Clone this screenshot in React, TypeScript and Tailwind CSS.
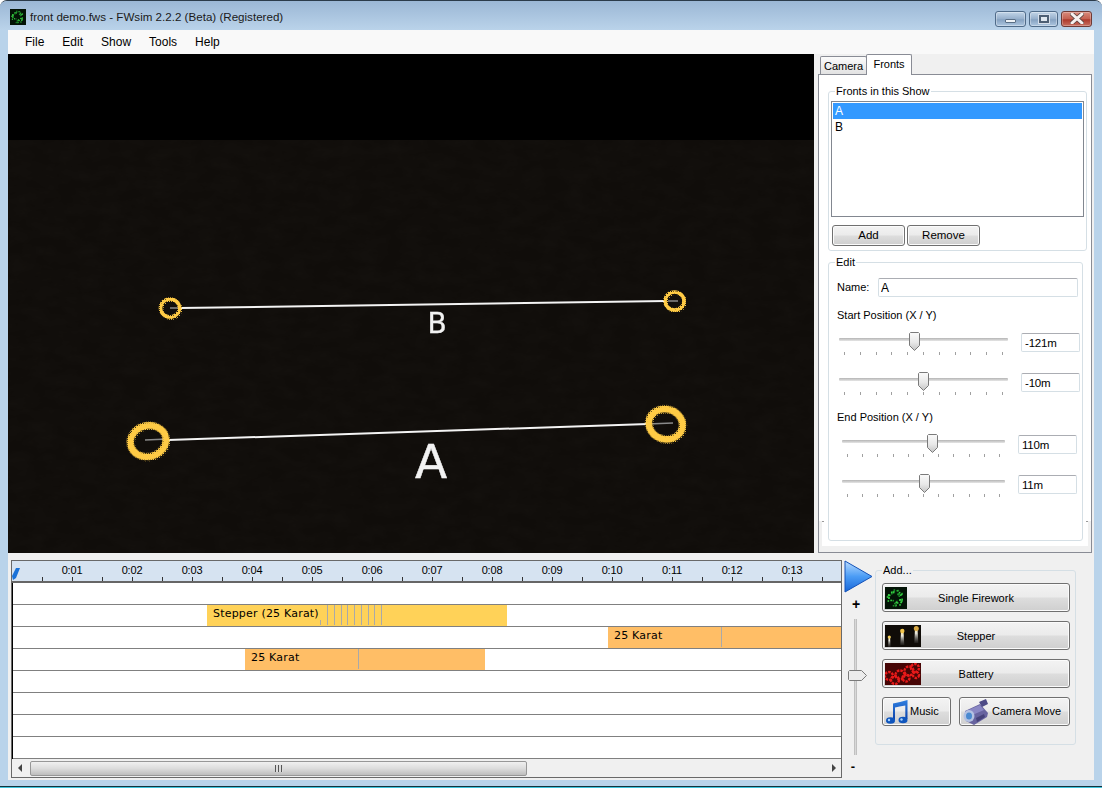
const ui = { fontFamily: '"Liberation Sans", Arial, sans-serif' }

const menus = ["File", "Edit", "Show", "Tools", "Help"]
const btnBg =
  "bg-[linear-gradient(#f3f3f3_0%,#ebebeb_48%,#dddddd_52%,#cfcfcf_100%)] border border-[#707070] rounded-[3px] shadow-[inset_0_0_0_1px_#fbfbfb]"

// timeline data, x is relative to the track area
const bars = [
  { row: 1, x: 194, w: 300, color: "#ffd258", label: "Stepper (25 Karat)", marks: [314, 321, 328, 334, 341, 348, 355, 361, 368], short: [307] },
  { row: 2, x: 595, w: 233, color: "#ffbe66", label: "25 Karat", marks: [708], short: [] },
  { row: 3, x: 232, w: 240, color: "#ffbe66", label: "25 Karat", marks: [345], short: [] },
]

function dots(count: number, w: number, h: number, seed: number) {
  return Array.from({ length: count }, (_, i) => {
    const a = Math.sin(i * 12.9898 + seed) * 43758.5453
    const b = Math.sin(i * 78.233 + seed) * 12543.1234
    const ang = (a - Math.floor(a)) * Math.PI * 2
    const rad = 0.35 + (b - Math.floor(b)) * 0.5
    return { x: w / 2 + (Math.cos(ang) * rad * w) / 2, y: h / 2 + (Math.sin(ang) * rad * h) / 2, k: i }
  })
}

function FireworkThumb({ size }: { size: number }) {
  return (
    <svg width={size} height={size} viewBox="0 0 22 22" className="block">
      <rect width="22" height="22" fill="#031306" />
      {dots(40, 20, 20, 3).map((d) => (
        <rect key={d.k} x={d.x} y={d.y} width="1.600" height="1.600" fill={d.k % 3 === 0 ? "#1c8f2a" : "#36d243"} />
      ))}
    </svg>
  )
}

function StepperThumb() {
  return (
    <svg width="36" height="22" viewBox="0 0 36 22" className="block">
      <defs>
        <linearGradient id="fl" x1="0" y1="0" x2="0" y2="1">
          <stop offset="0" stopColor="#ffe9a0" />
          <stop offset="0.35" stopColor="#e8e6dc" />
          <stop offset="1" stopColor="#777" stopOpacity="0.15" />
        </linearGradient>
      </defs>
      <rect width="36" height="22" fill="#100c08" />
      <path d="M3.500 12h1.600l.4 10h-2.400z" fill="url(#fl)" />
      <path d="M16 6h2.500l.8 14h-4z" fill="url(#fl)" />
      <path d="M30 3h2.500l.8 15h-4z" fill="url(#fl)" />
      <circle cx="4.300" cy="12" r="1.600" fill="#f4cf5c" />
      <circle cx="17.300" cy="6" r="2.200" fill="#f2c54c" />
      <circle cx="31.300" cy="3.500" r="2.500" fill="#d9aa46" />
    </svg>
  )
}

function BatteryThumb() {
  return (
    <svg width="36" height="22" viewBox="0 0 36 22" className="block">
      <rect width="36" height="22" fill="#470606" />
      <g fill="none" stroke="#e81a1a" strokeWidth="2.400" strokeDasharray="2.500 1">
        <circle cx="4" cy="13" r="4" />
        <circle cx="10" cy="17" r="4" />
        <circle cx="15" cy="12" r="4.500" />
        <circle cx="21" cy="15" r="3.500" />
        <circle cx="24" cy="8" r="4.500" />
        <circle cx="30" cy="5" r="4" />
        <circle cx="31" cy="12" r="3" />
      </g>
    </svg>
  )
}

function MusicIcon() {
  return (
    <svg width="24" height="26" viewBox="0 0 24 26" className="block">
      <defs>
        <linearGradient id="mu" x1="0" y1="0" x2="0" y2="1">
          <stop offset="0" stopColor="#2f7fe0" />
          <stop offset="1" stopColor="#0b3fa8" />
        </linearGradient>
      </defs>
      <path d="M8 21V4.500Q14 3.500 22.500 1v19h-2.200V6.500Q14 7.500 10 8.500V21z" fill="url(#mu)" />
      <ellipse cx="5.500" cy="21.500" rx="4.500" ry="3.300" fill="#0f55bd" />
      <ellipse cx="18" cy="21" rx="4.500" ry="3.300" fill="#0f55bd" />
      <circle cx="4" cy="21" r="1.200" fill="#a8d4ff" />
      <circle cx="16.500" cy="20.500" r="1.200" fill="#a8d4ff" />
    </svg>
  )
}

function CameraIcon() {
  return (
    <svg width="28" height="28" viewBox="0 0 28 28" className="block">
      <path d="M3 13l15-7 8 9-1 4-13 8-8-4z" fill="#67639f" />
      <path d="M4 13l14-6 4 5-14 6z" fill="#8a87c4" />
      <path d="M17 4l7-3 2 5-6 3z" fill="#4d4a86" />
      <ellipse cx="7" cy="18" rx="5.500" ry="6" fill="#b4c2e2" />
      <ellipse cx="7" cy="18" rx="3" ry="3.600" fill="#4a8ad0" />
      <path d="M14 20l8-4 1 3-8 5z" fill="#45427a" />
    </svg>
  )
}

function Group({ title, className, children }: { title: string; className: string; children: React.ReactNode }) {
  return (
    <div className={`relative border border-[#d5dfe5] rounded-[3px] ${className}`}>
      <span className="absolute left-[6px] top-[-8px] px-[1px] bg-inherit text-[11px] leading-[14px] text-black">{title}</span>
      {children}
    </div>
  )
}

function Slider({ left, width, thumb, value }: { left: number; width: number; thumb: number; value: string }) {
  return (
    <div className="flex h-[40px]">
      <div className="relative" style={{ marginLeft: left, width }}>
        <div className="mt-[6px] h-[3px] bg-[linear-gradient(#b4b4b4,#e6e6e6)] rounded-[1px]" />
        <div className="mt-[11px] flex justify-between px-[5px]">
          {Array.from({ length: 11 }, (_, i) => (
            <span key={i} className="w-[1px] h-[3px] bg-[#a0a0a0]" />
          ))}
        </div>
        <svg width="11" height="19" viewBox="0 0 11 19" className="absolute top-0" style={{ left: thumb - 5 }}>
          <defs>
            <linearGradient id="th" x1="0" y1="0" x2="0" y2="1">
              <stop offset="0" stopColor="#fafafa" />
              <stop offset="0.55" stopColor="#e8e8e8" />
              <stop offset="1" stopColor="#c4c4c4" />
            </linearGradient>
          </defs>
          <path d="M1.500.5h8l1 1v12l-5 5-5-5v-12z" fill="url(#th)" stroke="#7a7a7a" />
        </svg>
      </div>
      <input
        readOnly
        value={value}
        className="ml-[13px] mt-[1px] w-[59px] h-[19px] px-[3px] border border-[#d5dfe5] border-t-[#abadb3] rounded-[2px] bg-white text-[11.500px] tracking-[-0.2px] text-black outline-none"
      />
    </div>
  )
}

function Scene() {
  return (
    <svg width="806" height="499" viewBox="0 0 806 499" className="absolute left-0 top-0">
      <defs>
        <filter id="noise" x="0" y="0" width="100%" height="100%">
          <feTurbulence type="fractalNoise" baseFrequency="0.043 0.087" numOctaves="4" seed="9" />
          <feColorMatrix values="0 0 0 0 1  0 0 0 0 0.95  0 0 0 0 0.85  0 0 0 0.025 -0.008" />
        </filter>
        <filter id="rough" x="-20%" y="-20%" width="140%" height="140%">
          <feTurbulence type="turbulence" baseFrequency="0.5" numOctaves="1" seed="2" />
          <feDisplacementMap in="SourceGraphic" scale="1" />
        </filter>
      </defs>
      <rect x="0" y="86" width="806" height="413" filter="url(#noise)" />
      <g stroke="#f4f4f4" strokeWidth="2">
        <line x1="172" y1="254" x2="658" y2="247" />
        <line x1="160" y1="386" x2="640" y2="370" />
      </g>
      <g stroke="#8a8a8a" strokeWidth="1.500">
        <line x1="162" y1="254" x2="172" y2="254" />
        <line x1="660" y1="247" x2="670" y2="247" />
        <line x1="137" y1="386" x2="160" y2="385" />
        <line x1="640" y1="370" x2="665" y2="369" />
      </g>
      <g fill="none" stroke="#ffcb44" filter="url(#rough)">
        <ellipse cx="162" cy="254" rx="9.500" ry="9" strokeWidth="3.600" />
        <ellipse cx="666.500" cy="247" rx="9.500" ry="9" strokeWidth="3.600" />
        <ellipse cx="140" cy="387" rx="18" ry="15.500" strokeWidth="7" transform="rotate(-15 140 387)" />
        <ellipse cx="657.500" cy="370" rx="17" ry="15" strokeWidth="7" transform="rotate(15 657.500 370)" />
      </g>
      <text x="429" y="279" textAnchor="middle" fill="#f2f2f2" stroke="#f2f2f2" strokeWidth="0.300" fontSize="28" fontFamily="DejaVu Sans, sans-serif">B</text>
      <text x="423" y="424" textAnchor="middle" fill="#f2f2f2" stroke="#f2f2f2" strokeWidth="0.500" fontSize="47" fontFamily="DejaVu Sans, sans-serif">A</text>
    </svg>
  )
}

function Timeline() {
  return (
    <div className="w-[831px] h-[218px] border border-[#696969] flex flex-col shrink-0">
      <div className="relative h-[20px] bg-[#d6e3f1] shrink-0 text-[11px] tracking-[-0.2px] text-black overflow-hidden">
        {Array.from({ length: 13 }, (_, i) => (
          <span key={i} className="absolute top-[1px] w-[40px] text-center leading-[16px]" style={{ left: 40 + i * 60 }}>
            0:{String(i + 1).padStart(2, "0")}
          </span>
        ))}
        {Array.from({ length: 27 }, (_, i) => (
          <span key={i} className="absolute bottom-0 h-[4px] w-[1px] bg-[#333]" style={{ left: 30 + i * 30 }} />
        ))}
        <svg width="8" height="12" viewBox="0 0 8 12" className="absolute left-0 top-[7px]">
          <path d="M4 0h4L4 10 1 12 0 8z" fill="#1a72d8" />
        </svg>
      </div>
      <div className="h-[2px] bg-[#666] shrink-0" />
      <div className="relative border-l border-black">
        {Array.from({ length: 8 }, (_, i) => (
          <div key={i} className="h-[22px] border-b border-[#808080] bg-white" />
        ))}
        {bars.map((b) => (
          <div
            key={b.row}
            className="absolute h-[21px] text-[11px] leading-[12px] text-black pl-[6px] pt-[3px] tracking-[0.2px] whitespace-nowrap"
            style={{ left: b.x, top: b.row * 22, width: b.w, background: b.color, fontFamily: '"DejaVu Sans", sans-serif' }}
          >
            {b.label}
            {b.marks.map((m) => (
              <span key={m} className="absolute top-0 h-[20px] w-[1px] bg-[#a9a9a9]" style={{ left: m - b.x }} />
            ))}
            {b.short.map((m) => (
              <span key={m} className="absolute top-[15px] h-[5px] w-[1px] bg-[#a9a9a9]" style={{ left: m - b.x }} />
            ))}
          </div>
        ))}
      </div>
      <div className="flex-1 bg-[#f0f0f0] relative flex items-center">
        <span className="ml-[6px] w-0 h-0 border-y-[4px] border-y-transparent border-r-[4px] border-r-[#444]" />
        <div className="ml-[8px] w-[497px] h-[15px] border border-[#979797] rounded-[2px] bg-[linear-gradient(#f0f0f0,#dcdcdc_50%,#bdbdbd)] flex items-center justify-center">
          <span className="w-[8px] h-[7px] bg-[repeating-linear-gradient(90deg,#555_0_1px,#ddd_1px_3px)]" />
        </div>
        <span className="ml-auto mr-[5px] w-0 h-0 border-y-[4px] border-y-transparent border-l-[4px] border-l-[#444]" />
      </div>
    </div>
  )
}

export default function App() {
  return (
    <div className="w-[1102px] h-[788px] flex flex-col overflow-hidden rounded-t-[7px] border-t border-[#2b3b4a] bg-[#b9d3ea]" style={ui}>
      {/* title bar */}
      <div className="h-[29px] shrink-0 flex items-center pl-[10px] pr-[10px] bg-[linear-gradient(#9bb7d5,#bad3ea)]">
        <div className="mt-[2px]">
          <FireworkThumb size={16} />
        </div>
        <span className="ml-[4px] mt-[2px] text-[11.600px] text-[#1a1a1a]">front demo.fws - FWsim 2.2.2 (Beta) (Registered)</span>
        <div className="ml-auto flex mt-[6px] gap-[3px]">
          <div className="w-[31px] h-[16px] rounded-[3px] border border-[#4f6b89] bg-[linear-gradient(#c2d5e8,#95afcb_50%,#86a2c1_55%,#adc6e0)] shadow-[inset_0_0_0_1px_#ffffff55] flex items-center justify-center">
            <span className="mt-[4px] w-[11px] h-[4px] bg-[#eef2f6] border border-[#5a6f86] rounded-[1px]" />
          </div>
          <div className="w-[29px] h-[16px] rounded-[3px] border border-[#4f6b89] bg-[linear-gradient(#c2d5e8,#95afcb_50%,#86a2c1_55%,#adc6e0)] shadow-[inset_0_0_0_1px_#ffffff55] flex items-center justify-center">
            <span className="w-[10px] h-[8px] border-2 border-[#4d5f74] bg-[#dfe7ef] shadow-[0_0_0_1px_#d5deea]" />
          </div>
          <div className="w-[31px] h-[16px] rounded-[3px] border border-[#6e3a35] bg-[linear-gradient(#d98b7c,#c46050_50%,#ad3a2c_55%,#c76f60)] shadow-[inset_0_0_0_1px_#ffffff44] flex items-center justify-center">
            <svg width="14" height="11" viewBox="0 0 14 11">
              <path d="M2 1l10 9M12 1L2 10" stroke="#5b4440" strokeWidth="4.400" strokeLinecap="round" />
              <path d="M2 1l10 9M12 1L2 10" stroke="#f6f1ef" strokeWidth="3" strokeLinecap="round" />
            </svg>
          </div>
        </div>
      </div>

      <div className="flex-1 flex flex-col mx-[8px] min-h-0">
        {/* menu */}
        <div className="h-[24px] shrink-0 flex items-center pl-[17px] gap-[18px] bg-[#f9f9f9] text-[12px] text-black">
          {menus.map((m) => (
            <span key={m}>{m}</span>
          ))}
        </div>

        <div className="h-[726px] shrink-0 bg-[#f0f0f0] flex flex-col">
          <div className="flex h-[499px] shrink-0">
            {/* 3d view */}
            <div className="relative w-[806px] shrink-0 flex flex-col">
              <div className="h-[86px] bg-black" />
              <div className="flex-1 bg-[#100d0a]" />
              <Scene />
            </div>

            {/* side panel */}
            <div className="ml-[4px] w-[274px] flex flex-col">
              <div className="h-[20px] flex items-end pl-[2px] text-[11px] text-black relative z-10">
                <div className="w-[47px] h-[18px] border border-b-0 border-[#898c95] rounded-t-[2px] bg-[linear-gradient(#fbfbfb,#e2e2e2)] text-center leading-[18px]">Camera</div>
                <div className="ml-[-1px] w-[46px] h-[21px] mb-[-1px] border border-b-0 border-[#898c95] rounded-t-[2px] bg-white text-center leading-[18px]">Fronts</div>
              </div>
              <div className="relative h-[479px] border border-[#898c95] bg-white pl-[9px] pt-[16px]">
                <div className="absolute left-0 right-0 bottom-0 h-[31px] border-x-[3px] border-b-[6px] border-[#f0f0f0]" />
                <span className="absolute left-[3px] bottom-[30px] w-[2px] h-[1px] bg-[#999]" />
                <span className="absolute right-[3px] bottom-[30px] w-[2px] h-[1px] bg-[#999]" />
                <Group title="Fronts in this Show" className="w-[259px] h-[160px] bg-white">
                  <div className="ml-[2px] mt-[9px] w-[253px] h-[116px] border border-[#828790] p-[1px] text-[12px] leading-[16px]">
                    <div className="bg-[#3399ff] text-white pl-[2px] h-[16px]">A</div>
                    <div className="text-black pl-[2px] h-[16px]">B</div>
                  </div>
                  <div className="ml-[3px] mt-[8px] flex gap-[2px] text-[11.500px] text-black">
                    <div className={`w-[73px] h-[21px] text-center leading-[19px] ${btnBg}`}>Add</div>
                    <div className={`w-[73px] h-[21px] text-center leading-[19px] ${btnBg}`}>Remove</div>
                  </div>
                </Group>
                <Group title="Edit" className="mt-[11px] w-[255px] h-[279px] bg-white">
                  <div className="flex items-center mt-[15px] pl-[8px] text-[11px] text-black">
                    <span className="w-[41px]">Name:</span>
                    <input readOnly value="A" className="w-[200px] h-[19px] px-[2px] border border-[#d5dfe5] border-t-[#abadb3] rounded-[2px] text-[12px] outline-none" />
                  </div>
                  <div className="mt-[11px] pl-[8px] h-[14px] leading-[14px] text-[11px] text-black">Start Position (X / Y)</div>
                  <div className="mt-[10px]">
                    <Slider left={10} width={169} thumb={75} value="-121m" />
                    <Slider left={10} width={169} thumb={84} value="-10m" />
                  </div>
                  <div className="mt-[-2px] pl-[8px] h-[14px] leading-[14px] text-[11px] text-black">End Position (X / Y)</div>
                  <div className="mt-[10px]">
                    <Slider left={13} width={163} thumb={90} value="110m" />
                    <Slider left={13} width={163} thumb={82} value="11m" />
                  </div>
                </Group>
              </div>
            </div>
          </div>

          {/* bottom area */}
          <div className="flex mt-[7px] pl-[3px]">
            <Timeline />
            <div className="w-[33px] flex flex-col shrink-0">
              <svg width="30" height="33" viewBox="0 0 30 33" className="ml-[2px] block">
                <defs>
                  <linearGradient id="pl" x1="0" y1="0" x2="0" y2="1">
                    <stop offset="0" stopColor="#b9dcff" />
                    <stop offset="0.5" stopColor="#4b9cf5" />
                    <stop offset="1" stopColor="#1766d8" />
                  </linearGradient>
                </defs>
                <path d="M1 1l27 15.500L1 32z" fill="url(#pl)" stroke="#1452b8" />
              </svg>
              <div className="mt-[5px] ml-[8px] w-[12px] h-[12px] text-[14px] leading-[12px] font-bold text-black text-center">+</div>
              <div className="relative mt-[9px] ml-[12px] w-[3px] h-[136px] bg-[#d8d8d8] border-x border-[#c0c0c0]">
                <svg width="19" height="11" viewBox="0 0 19 11" className="absolute left-[-7px] top-[51px]">
                  <path d="M1.500.5h12l5 5-5 5h-12l-1-1v-8z" fill="#ececec" stroke="#7a7a7a" />
                </svg>
              </div>
              <div className="mt-[6px] ml-[5px] w-[12px] h-[12px] text-[13px] leading-[12px] font-bold text-black text-center">-</div>
            </div>
            <Group title="Add..." className="mt-[10px] w-[201px] h-[175px] bg-[#f0f0f0] flex flex-col items-start pl-[6px] pt-[12px]">
              {[
                { label: "Single Firework", icon: <FireworkThumb size={22} /> },
                { label: "Stepper", icon: <StepperThumb /> },
                { label: "Battery", icon: <BatteryThumb /> },
              ].map((b) => (
                <div key={b.label} className={`relative w-[188px] h-[29px] mb-[9px] text-[11px] text-black text-center leading-[28px] ${btnBg}`}>
                  <div className="absolute left-[2px] top-[3px]">{b.icon}</div>
                  {b.label}
                </div>
              ))}
              <div className="flex gap-[8px] text-[11px] text-black">
                <div className={`w-[69px] h-[29px] flex items-center pl-[2px] ${btnBg}`}>
                  <MusicIcon />
                  <span className="ml-[1px]">Music</span>
                </div>
                <div className={`w-[111px] h-[29px] flex items-center pl-[2px] ${btnBg}`}>
                  <CameraIcon />
                  <span className="ml-[2px]">Camera Move</span>
                </div>
              </div>
            </Group>
          </div>
        </div>
      </div>
      <div className="h-[2px] bg-[#14323c] shrink-0 border-b border-[#3fc4dc]" />
    </div>
  )
}
